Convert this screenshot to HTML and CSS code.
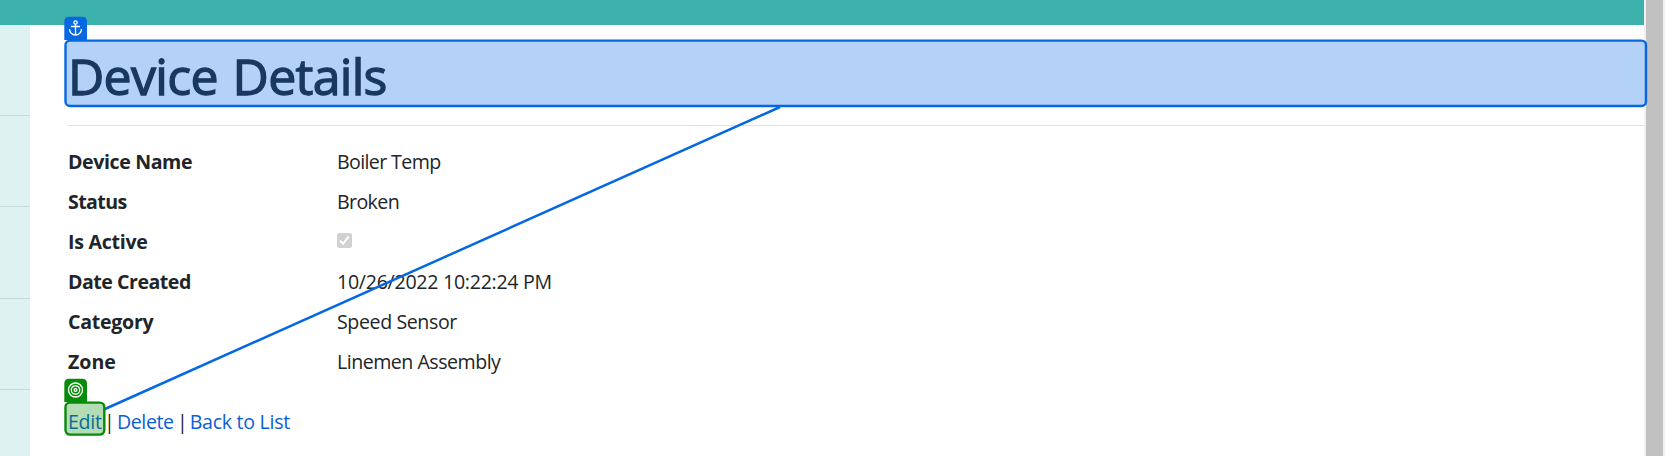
FILE: index.html
```
<!DOCTYPE html>
<html lang="en">
<head>
<meta charset="utf-8">
<title>Device Details</title>
<link rel="stylesheet" href="styles.css">
</head>
<body>
<div class="viewport">
  <div class="page">
    <header class="topbar"></header>
    <div class="body">
      <nav class="sidebar"><div class="item"></div><div class="item"></div><div class="item tall"></div><div class="item"></div></nav>
      <main class="content">
        <h1 class="title">Device Details</h1>
        <hr class="rule">
        <dl class="details">
          <dt class="snug">Device Name</dt><dd class="tighter">Boiler Temp</dd>
          <dt class="tighter">Status</dt><dd class="tighter">Broken</dd>
          <dt class="close">Is Active</dt>
          <dd><svg class="check" viewBox="0 0 15 15"><rect width="15" height="15" rx="2.2" fill="#d1d1d1"/><path d="M3 7.7 6 10.8 11.8 3.4" fill="none" stroke="#fff" stroke-width="2"/></svg></dd>
          <dt class="tight">Date Created</dt><dd class="close">10/26/2022 10:22:24 PM</dd>
          <dt class="close">Category</dt><dd class="snug">Speed Sensor</dd>
          <dt>Zone</dt><dd class="tight">Linemen Assembly</dd>
        </dl>
        <div class="links"><a class="close">Edit</a><span class="bar">|</span><a class="snug">Delete</a><span class="bar wide">|</span><a class="close">Back to List</a></div>
      </main>
    </div>
  </div>
  <div class="scrollbar"><div class="thumb"></div></div>
</div>
<svg class="overlay" viewBox="0 0 1665 456">
  <path d="M780 107 105 409" stroke="#0568e3" stroke-width="2.5"/>
  <rect x="65.5" y="40.6" width="1580.5" height="65.4" rx="4.5" fill="#0568e3" fill-opacity=".3" stroke="#0568e3" stroke-width="2.4"/>
  <path d="M64.3 40V21.5q0-4.7 4.7-4.7h13.3q4.7 0 4.7 4.7V40z" fill="#0568e3"/>
  <g fill="none" stroke="#fff" stroke-width="1.3"><circle cx="75.5" cy="22.5" r="1.7"/><path d="M75.5 24.2V35M71 26.5h9M69.5 29a6 6 0 0 0 12 0"/></g>
  <rect x="65.5" y="402.6" width="38.8" height="32" rx="4.5" fill="#088a0b" fill-opacity=".3" stroke="#088a0b" stroke-width="2.4"/>
  <path d="M64.3 402V383.5q0-4.7 4.7-4.7h13.3q4.7 0 4.7 4.7V402z" fill="#088a0b"/>
  <g fill="none" stroke="#fff" stroke-width="1.3"><circle cx="75.5" cy="390" r="7"/><circle cx="75.5" cy="390" r="4.2"/><circle cx="75.5" cy="390" r="1.4"/></g>
</svg>
</body>
</html>
```
FILE: styles.css
```
* { box-sizing: border-box; }
body { margin: 0; background: #fff; color: #212529; font: 19.6px/30px "Open Sans", "Noto Sans", sans-serif; overflow: hidden; }
.viewport { display: flex; height: 456px; }
.page { flex: 1; display: flex; flex-direction: column; }
.topbar { height: 25px; background: #3cb0ab; }
.body { flex: 1; display: flex; }
.sidebar { width: 30px; background: #def2f1; }
.item { height: 91px; border-bottom: 1px solid #c4d9d8; }
.item.tall { height: 92px; }
.content { flex: 1; padding: 15px 0 0 38px; }
.title { margin: 0; height: 67px; font-size: 50px; line-height: 72px; font-weight: 500; letter-spacing: -.7px; word-spacing: 2.5px; white-space: nowrap; -webkit-text-stroke: 1.3px #212529; }
.rule { margin: 18px 0 0; border: 0; border-top: 1px solid #e1e2e3; }
.details { margin: 21px 0 0; display: grid; grid-template-columns: 269px 1fr; grid-auto-rows: 40px; }
dt { font-weight: 700; }
dd { margin: 0; }
.close { letter-spacing: -.28px; }
.snug { letter-spacing: -.4px; }
.tight { letter-spacing: -.5px; }
.tighter { letter-spacing: -.62px; }
.check { display: block; width: 15px; height: 15px; margin-top: 6px; }
.links { margin-top: 20px; display: flex; color: #212529; }
.links a { color: #0b5ed7; }
.bar { margin: 0 2.2px 0 2.3px; }
.bar.wide { margin: 0 1.9px 0 3.3px; }
.scrollbar { width: 21px; background: #f1f1f1; padding: 0 2px; }
.thumb { height: 100%; background: #c1c1c1; }
.overlay { position: absolute; left: 0; top: 0; width: 1665px; height: 456px; }
```
